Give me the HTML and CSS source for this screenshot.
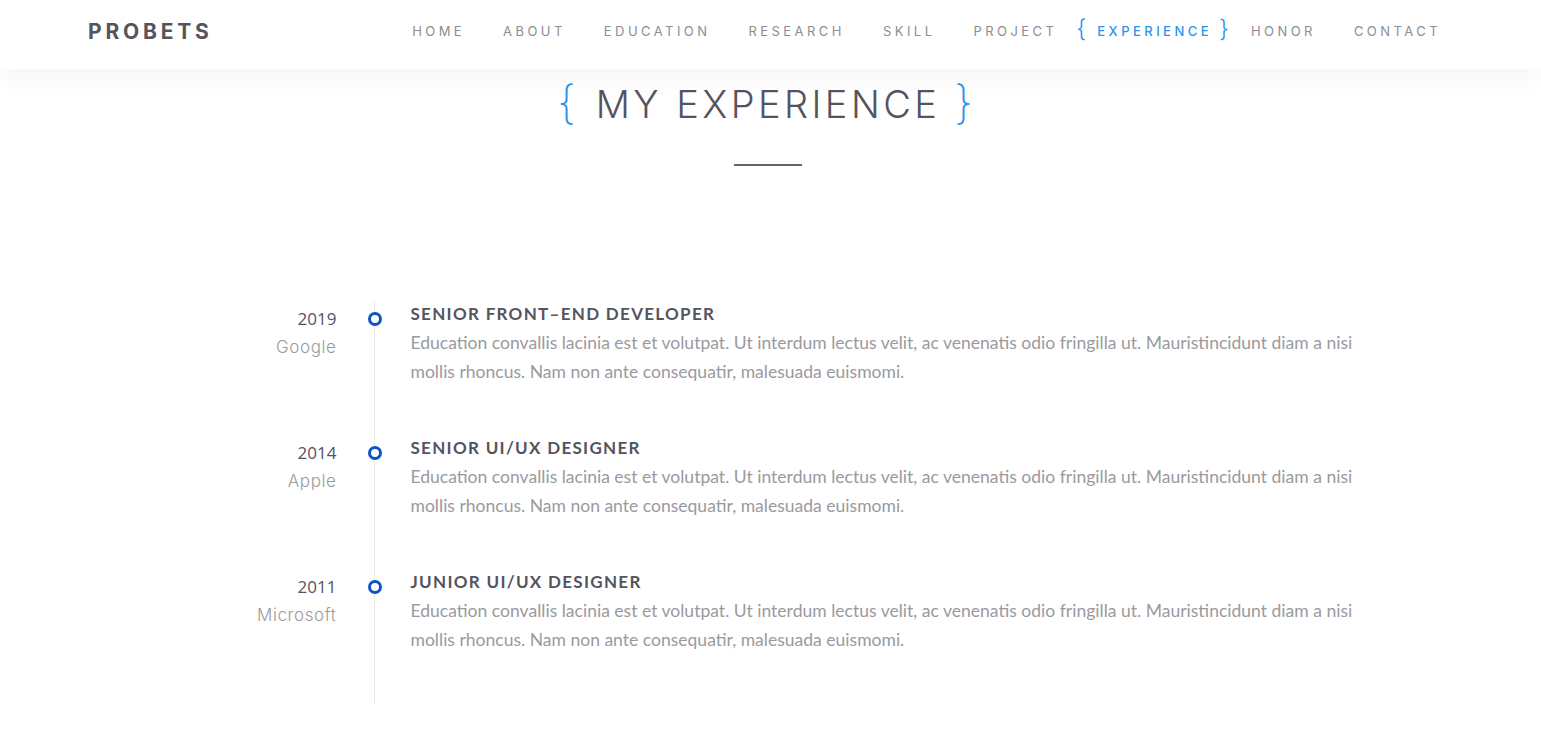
FILE: index.html
```html
<!DOCTYPE html>
<html lang="en">
<head>
<meta charset="utf-8">
<title>Probets - Experience</title>
<link rel="stylesheet" href="styles.css">
</head>
<body>
<header class="topbar">
  <div class="logo">PROBETS</div>
  <nav class="nav">
    <a class="nav-link">HOME</a>
    <a class="nav-link">ABOUT</a>
    <a class="nav-link">EDUCATION</a>
    <a class="nav-link">RESEARCH</a>
    <a class="nav-link">SKILL</a>
    <a class="nav-link">PROJECT</a>
    <a class="nav-link active"><span class="brace">{</span>EXPERIENCE<span class="brace">}</span></a>
    <a class="nav-link">HONOR</a>
    <a class="nav-link">CONTACT</a>
  </nav>
</header>

<section class="experience">
  <h2 class="section-title"><span class="brace">{</span>MY EXPERIENCE<span class="brace">}</span></h2>
  <div class="title-rule"></div>

  <div class="timeline">
    <div class="item">
      <div class="when">
        <div class="year">2019</div>
        <div class="company">Google</div>
      </div>
      <div class="marker"><span class="dot"></span></div>
      <div class="what">
        <h3 class="role">SENIOR FRONT–END DEVELOPER</h3>
        <p class="desc">Education convallis lacinia est et volutpat. Ut interdum lectus velit, ac venenatis odio fringilla ut. Mauristincidunt diam a nisi mollis rhoncus. Nam non ante consequatir, malesuada euismomi.</p>
      </div>
    </div>
    <div class="item">
      <div class="when">
        <div class="year">2014</div>
        <div class="company">Apple</div>
      </div>
      <div class="marker"><span class="dot"></span></div>
      <div class="what">
        <h3 class="role">SENIOR UI/UX DESIGNER</h3>
        <p class="desc">Education convallis lacinia est et volutpat. Ut interdum lectus velit, ac venenatis odio fringilla ut. Mauristincidunt diam a nisi mollis rhoncus. Nam non ante consequatir, malesuada euismomi.</p>
      </div>
    </div>
    <div class="item">
      <div class="when">
        <div class="year">2011</div>
        <div class="company">Microsoft</div>
      </div>
      <div class="marker"><span class="dot"></span></div>
      <div class="what">
        <h3 class="role">JUNIOR UI/UX DESIGNER</h3>
        <p class="desc">Education convallis lacinia est et volutpat. Ut interdum lectus velit, ac venenatis odio fringilla ut. Mauristincidunt diam a nisi mollis rhoncus. Nam non ante consequatir, malesuada euismomi.</p>
      </div>
    </div>
  </div>
</section>
</body>
</html>
```

FILE: styles.css
```css
* { box-sizing: border-box; }
html, body { margin: 0; padding: 0; background: #fff; }
body {
  font-family: "Lato", "Open Sans", sans-serif;
  color: #55545e;
  overflow: hidden;
}

.topbar {
  position: relative;
  z-index: 2;
  height: 69px;
  display: flex;
  align-items: center;
  justify-content: space-between;
  padding: 0 100px 8px 88px;
  background: #fff;
  box-shadow: 0 8px 28px rgba(0, 0, 0, 0.045);
}

.logo {
  font-family: "Inter", sans-serif;
  font-weight: 700;
  font-size: 21px;
  letter-spacing: 3.8px;
  color: #55545e;
  margin-top: 2px;
}

.nav {
  display: flex;
  align-items: center;
  gap: 38px;
}

.nav-link {
  font-family: "Inter", sans-serif;
  font-size: 13px;
  font-weight: 400;
  letter-spacing: 3.45px;
  color: #8d8d93;
  display: flex;
  align-items: center;
}

.nav-link.active {
  color: #2e93ec;
  font-weight: 500;
  margin: 0 -16px 0 -19px;
}

.nav-link .brace {
  font-size: 24px;
  font-weight: 300;
  color: #2e93ec;
  letter-spacing: 0;
  position: relative;
  top: -2px;
}
.nav-link .brace:first-child { margin-right: 11px; }
.nav-link .brace:last-child { margin-left: 7px; }

.experience {
  display: flex;
  flex-direction: column;
  align-items: center;
}

.section-title {
  margin: 10px 11px 0 0;
  font-family: "Inter", sans-serif;
  font-weight: 300;
  font-size: 38px;
  letter-spacing: 3.4px;
  color: #55545e;
  display: flex;
  align-items: center;
  line-height: 50px;
}
.section-title .brace {
  color: #2e93ec;
  font-size: 46px;
  font-weight: 200;
  letter-spacing: 0;
  position: relative;
  top: -2px;
}
.section-title .brace:first-child { margin-right: 20px; }
.section-title .brace:last-child { margin-left: 14px; }

.title-rule {
  width: 68px;
  height: 2px;
  background: #666;
  margin-top: 35px;
  position: relative;
  left: -3px;
}

.timeline {
  width: 1180px;
  margin-top: 136px;
  display: flex;
  flex-direction: column;
  position: relative;
}
.timeline::before {
  content: "";
  position: absolute;
  left: 193px;
  top: 0;
  bottom: -50px;
  width: 1px;
  background: #ececec;
}

.item {
  display: grid;
  grid-template-columns: 156px 76px 1fr;
  height: 134px;
}

.when {
  text-align: right;
  padding-top: 4px;
}
.year {
  font-family: "Open Sans", sans-serif;
  font-size: 17px;
  color: #55545e;
  line-height: 26px;
}
.company {
  font-family: "Inter", sans-serif;
  font-size: 17px;
  font-weight: 300;
  letter-spacing: 0.6px;
  color: #9a9a9e;
  line-height: 31px;
}

.marker {
  display: flex;
  justify-content: flex-start;
  padding-left: 31px;
  padding-top: 10px;
}
.dot {
  width: 14px;
  height: 14px;
  border: 3px solid #0d52c2;
  border-radius: 50%;
  background: #fff;
  position: relative;
  z-index: 1;
}

.what { margin-left: -2px; }
.role {
  margin: 0;
  font-family: "Lato", sans-serif;
  font-weight: 700;
  font-size: 17px;
  letter-spacing: 1.3px;
  color: #55545e;
  line-height: 24px;
}
.desc {
  margin: 2px 0 0;
  font-family: "Lato", sans-serif;
  font-size: 17.55px;
  line-height: 29px;
  color: #9a9a9e;
  width: 960px;
}
```
